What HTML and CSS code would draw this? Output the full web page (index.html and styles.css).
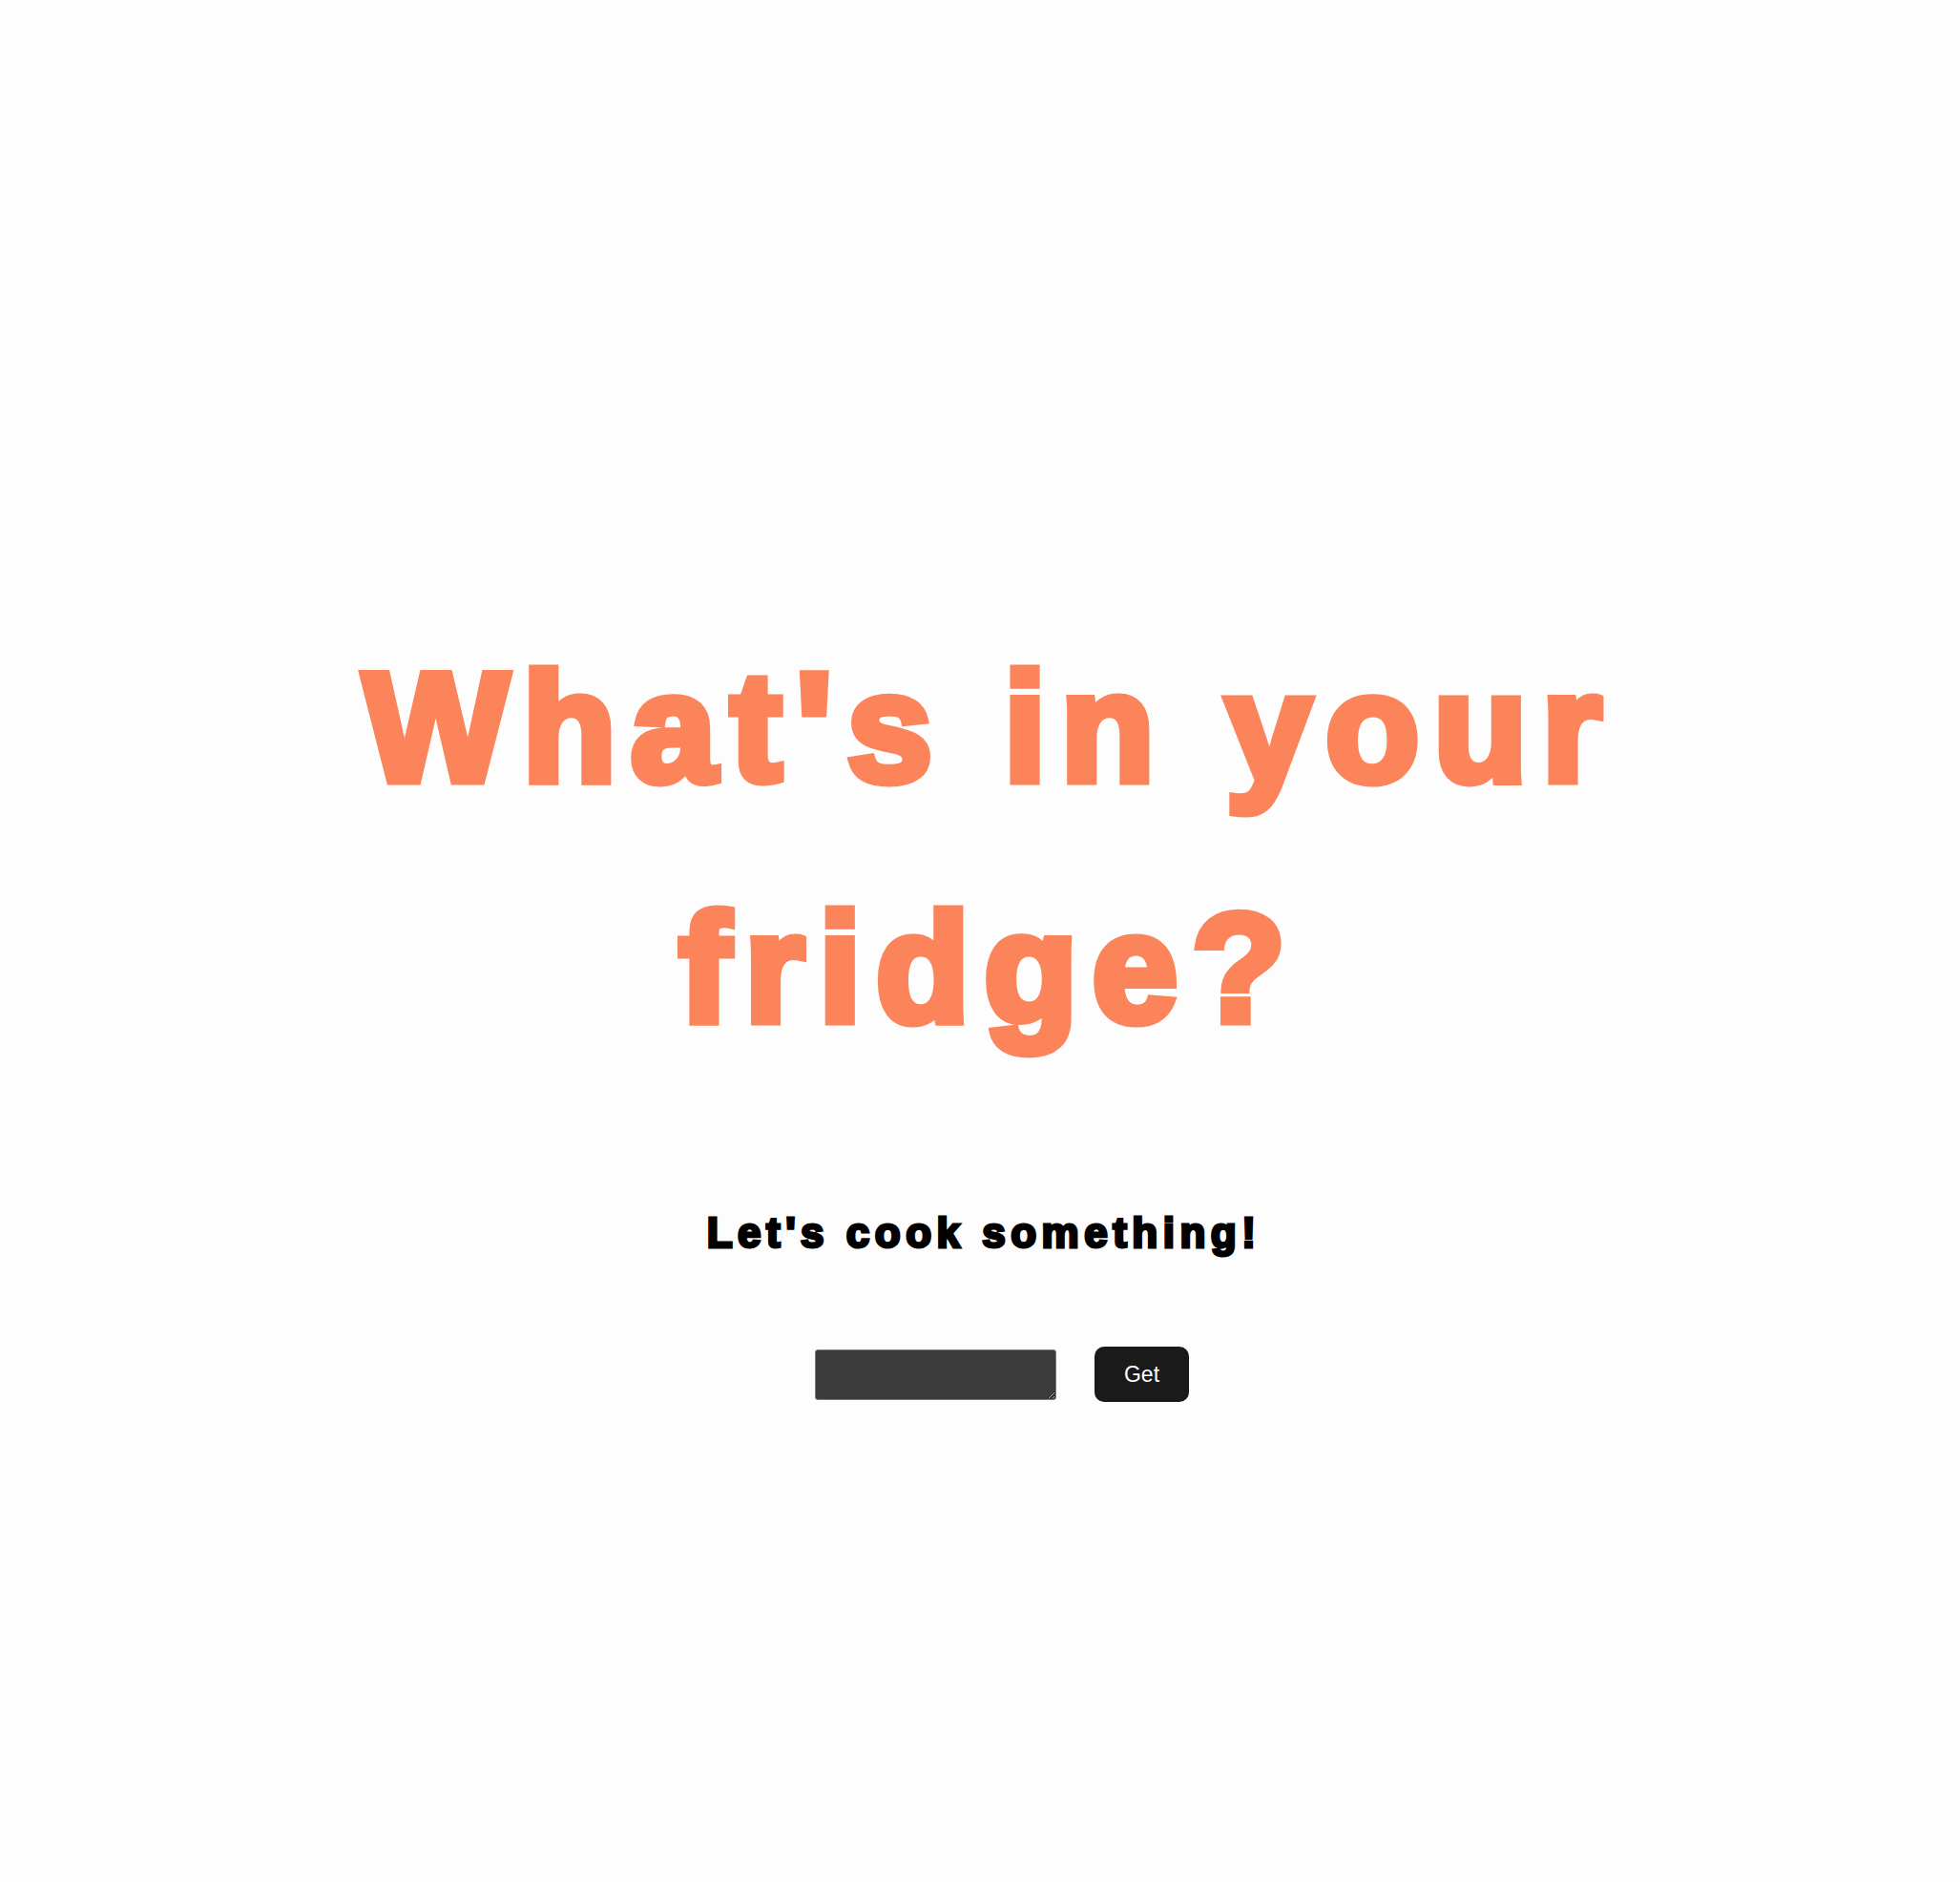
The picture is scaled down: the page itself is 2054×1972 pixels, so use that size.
FILE: index.html
```html
<!DOCTYPE html>
<html lang="en">
<head>
<meta charset="utf-8">
<title>What's in your fridge?</title>
<link rel="stylesheet" href="styles.css">
</head>
<body>
<main class="page">
  <h1 class="title">What's in your<br>fridge?</h1>
  <h2 class="subtitle">Let's cook something!</h2>
  <form class="ask" onsubmit="return false">
    <textarea class="ingredients"></textarea>
    <button class="get" type="submit">Get</button>
  </form>
</main>
</body>
</html>
```
FILE: styles.css
```css
html, body {
  margin: 0;
  padding: 0;
  background: #fdfdfd;
}
.page {
  display: flex;
  flex-direction: column;
  align-items: center;
  padding-top: 636px;
}
.title {
  margin: 0;
  padding-left: 20px;
  font-family: "Liberation Sans", Arial, sans-serif;
  font-weight: 700;
  font-size: 161px;
  line-height: 252px;
  color: #fb845a;
  text-align: center;
  -webkit-text-stroke: 9px #fb845a;
  letter-spacing: 15px;
}
.subtitle {
  margin: 124px 0 0;
  padding-left: 8px;
  font-family: "Liberation Sans", Arial, sans-serif;
  font-weight: 700;
  font-size: 44px;
  line-height: 55px;
  color: #000;
  -webkit-text-stroke: 3px #000;
  letter-spacing: 5.5px;
}
.ask {
  margin-top: 92px;
  padding-left: 46px;
  display: flex;
  align-items: center;
  gap: 40px;
}
.ingredients {
  box-sizing: border-box;
  width: 253px;
  height: 53px;
  margin: 0;
  background: #3b3b3b;
  border: 1px solid #7a7a7a;
  border-radius: 3px;
  color: #fff;
}
.get {
  box-sizing: border-box;
  width: 99px;
  height: 58px;
  border: none;
  border-radius: 10px;
  background: #1a1a1a;
  color: #fff;
  font-family: "Liberation Sans", Arial, sans-serif;
  font-size: 23px;
}
```
